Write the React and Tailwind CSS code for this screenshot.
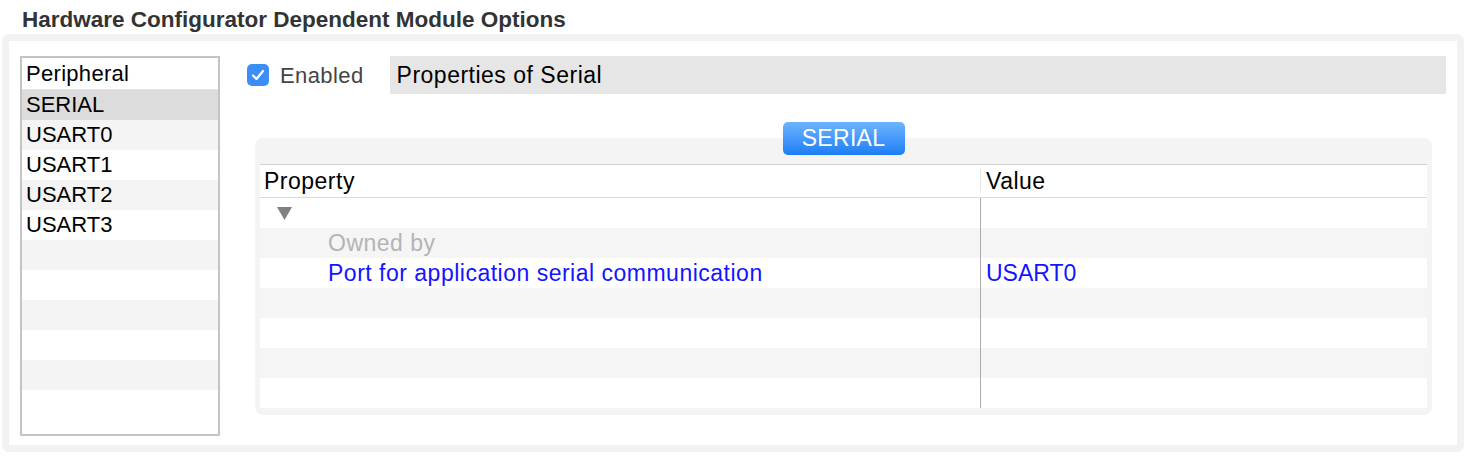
import React from "react";

const peripherals = ["SERIAL", "USART0", "USART1", "USART2", "USART3", "", "", "", "", "", ""];

const rows = [
  { kind: "group" },
  { kind: "owned", name: "Owned by", value: "" },
  { kind: "prop", name: "Port for application serial communication", value: "USART0" },
  { kind: "empty" },
  { kind: "empty" },
  { kind: "empty" },
  { kind: "empty" },
];

const CheckBox = () => (
  <div className="w-[22px] h-[22px] rounded-[5px] bg-[#3b8ef6] flex items-center justify-center">
    <svg width="18" height="18" viewBox="0 0 18 18" fill="none">
      <path d="M4 9.5 L7.5 13 L14 5" stroke="white" strokeWidth="2.2" strokeLinecap="round" strokeLinejoin="round" />
    </svg>
  </div>
);

const App = () => (
  <div className="w-[1480px] h-[462px] bg-white font-['Liberation_Sans',Arial,sans-serif] text-[23px] tracking-[0.5px] overflow-hidden">
    {/* title */}
    <div className="pl-[22px] pt-[7px] h-[34px] text-[22.5px] leading-[26px] tracking-normal font-bold text-[#333]">
      Hardware Configurator Dependent Module Options
    </div>

    {/* outer panel */}
    <div className="ml-[2px] w-[1462px] h-[418px] border-[7px] border-[#f2f2f2] rounded-[7px] bg-white flex pl-[11px] pt-[15px] pr-[11px]">
      {/* peripheral list */}
      <div className="w-[200px] h-[380px] border-2 border-[#c4c4c4] overflow-hidden shrink-0 text-[22px] tracking-normal">
        <div className="h-[32px] leading-[32px] pl-[4px] text-black border-b border-[#e2e2e2] tracking-[0.3px]">Peripheral</div>
        {peripherals.map((p, i) => (
          <div
            key={i}
            className={
              i === 0
                ? "h-[30px] leading-[30px] pl-[4px] text-black bg-[#dcdcdc]"
                : i % 2 === 1
                ? "h-[30px] leading-[30px] pl-[4px] text-black bg-[#f4f4f4]"
                : "h-[30px] leading-[30px] pl-[4px] text-black bg-white"
            }
          >
            {p}
          </div>
        ))}
      </div>

      {/* right side */}
      <div className="flex-1 ml-[27px]">
        <div className="flex items-center">
          <CheckBox />
          <span className="ml-[11px] text-[22px] tracking-[0.4px] text-[#444]">Enabled</span>
          <div className="ml-[26px] flex-1 h-[38px] bg-[#e6e6e6] pl-[7px] flex items-center text-black">
            Properties of Serial
          </div>
        </div>

        {/* properties table panel */}
        <div className="relative ml-[8px] mr-[14px] mt-[44px] bg-[#f4f4f4] rounded-[8px] px-[5px] pt-[26px] pb-[7px]">
          <div className="absolute -top-[16px] left-1/2 -translate-x-1/2 w-[122px] h-[33px] rounded-[5px] bg-gradient-to-b from-[#6cb4fe] to-[#1a7df5] text-white tracking-[0.3px] flex items-center justify-center leading-none">
            SERIAL
          </div>

          <div className="bg-white border-t border-[#d0d0d0]">
            {/* header */}
            <div className="flex h-[33px] items-center border-b border-[#dadada]">
              <div className="w-[721px] pl-[4px] text-black flex items-center justify-between">
                <span>Property</span>
                <span className="w-px h-[24px] bg-[#e4e4e4]" />
              </div>
              <div className="flex-1 pl-[5px] text-black">Value</div>
            </div>

            {/* body */}
            {rows.map((r, i) => (
              <div key={i} className={i % 2 === 0 ? "flex h-[30px] bg-white" : "flex h-[30px] bg-[#f5f5f5]"}>
                <div className="w-[721px] border-r border-[#ababab] flex items-center">
                  {r.kind === "group" && (
                    <svg className="ml-[17px]" width="15" height="13" viewBox="0 0 15 13">
                      <path d="M0 0 L15 0 L7.5 13 Z" fill="#808080" />
                    </svg>
                  )}
                  {r.kind === "owned" && <span className="ml-[68px] text-[#b4b4b4]">{r.name}</span>}
                  {r.kind === "prop" && <span className="ml-[68px] text-[#1414ff]">{r.name}</span>}
                </div>
                <div className="flex-1 pl-[5px] flex items-center">
                  {r.kind === "prop" && <span className="text-[#1414ff] tracking-normal">{r.value}</span>}
                </div>
              </div>
            ))}
          </div>
        </div>
      </div>
    </div>
  </div>
);

export default App;
